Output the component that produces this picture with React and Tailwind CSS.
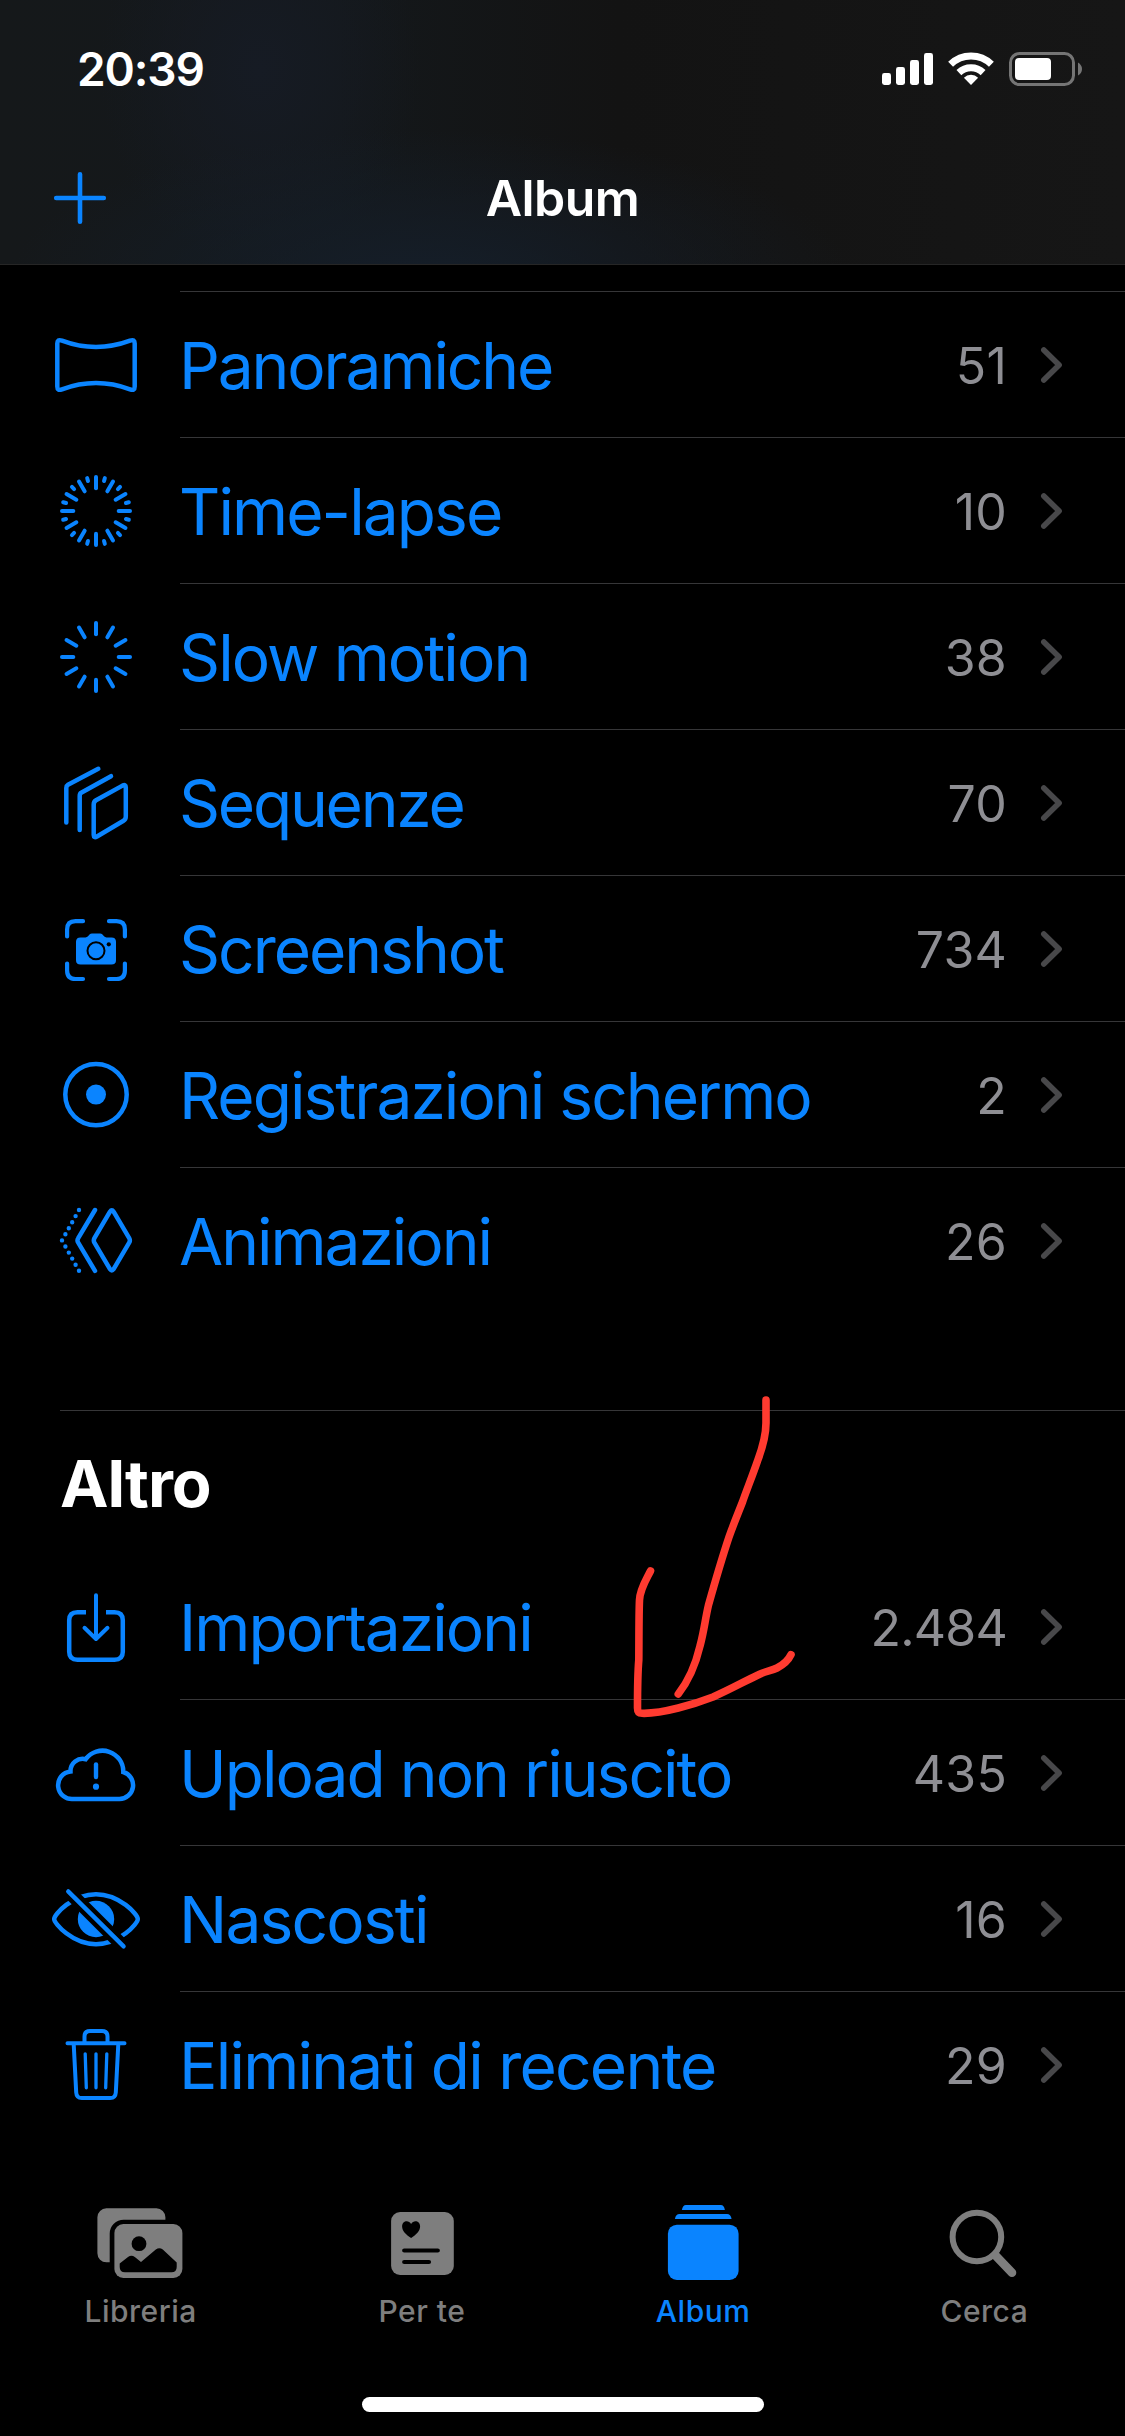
import React from "react";

const mediaTypes = [
  { label: "Panoramiche", count: "51", icon: "panorama", spacing: "tracking-[-2.1px]" },
  { label: "Time-lapse", count: "10", icon: "timelapse", spacing: "tracking-[-1.9px]" },
  { label: "Slow motion", count: "38", icon: "slowmo", spacing: "tracking-[-1.9px]" },
  { label: "Sequenze", count: "70", icon: "burst", spacing: "tracking-[-2.2px]" },
  { label: "Screenshot", count: "734", icon: "screenshot", spacing: "tracking-[-2px]" },
  { label: "Registrazioni schermo", count: "2", icon: "record", spacing: "tracking-[-1.95px]" },
  { label: "Animazioni", count: "26", icon: "animated", spacing: "tracking-[-2px]" },
];

const others = [
  { label: "Importazioni", count: "2.484", icon: "import", spacing: "tracking-[-1.9px]" },
  { label: "Upload non riuscito", count: "435", icon: "cloud", spacing: "tracking-[-1.95px]" },
  { label: "Nascosti", count: "16", icon: "hidden", spacing: "tracking-[-1.8px]" },
  { label: "Eliminati di recente", count: "29", icon: "trash", spacing: "tracking-[-1.75px]" },
];

const Ticks = ({ count, from, to, offset = 0 }) =>
  Array.from({ length: count }, (_, i) => (
    <line
      key={i}
      x1="0"
      x2="0"
      y1={-from}
      y2={-to}
      strokeWidth="4"
      transform={`rotate(${offset + (i * 360) / count})`}
    />
  ));

// Row icons are drawn around (0, 0)
const rowIcons = {
  panorama: (
    <path d="M-38.7 -21.5 C-38.7 -24.8 -37.3 -25.5 -34 -24.3 C-22 -19.8 -12 -18 0 -18 C12 -18 22 -19.8 34 -24.3 C37.3 -25.5 38.7 -24.8 38.7 -21.5 V21.5 C38.7 24.8 37.3 25.5 34 24.3 C22 19.8 12 18 0 18 C-12 18 -22 19.8 -34 24.3 C-37.3 25.5 -38.7 24.8 -38.7 21.5 Z" />
  ),
  timelapse: (
    <>
      <Ticks count={12} from={22.7} to={34} />
      <Ticks count={12} from={31} to={34} offset={15} />
    </>
  ),
  slowmo: <Ticks count={12} from={22.7} to={34} />,
  burst: (
    <>
      <path d="M2.3 -34.2 L-28 -18.2 Q-29.7 -17.2 -29.7 -15 V19.5" />
      <path d="M15 -26.8 L-14.8 -10.2 Q-16.3 -9.4 -16.3 -7 V27" />
      <path d="M-2.3 1.5 Q-2.3 -1.5 0 -2.8 L26.5 -17.4 Q29.8 -19 29.8 -15.8 V13.5 Q29.8 16.4 27.5 17.7 L1 33.5 Q-2.3 35.3 -2.3 32 Z" />
    </>
  ),
  screenshot: (
    <>
      <path
        strokeWidth="4.2"
        d="M-13 -27.8 H-20.5 Q-28.9 -27.8 -28.9 -19.5 V-12.5 M13 -27.8 H20.5 Q28.9 -27.8 28.9 -19.5 V-12.5 M-13 30 H-20.5 Q-28.9 30 -28.9 21.5 V14.5 M13 30 H20.5 Q28.9 30 28.9 21.5 V14.5"
      />
      <path
        fill="currentColor"
        stroke="none"
        d="M-15.5 -11.6 H-10.5 Q-9 -11.6 -8 -12.7 L-6.5 -14.4 Q-5.5 -15.4 -4 -15.4 H4 Q5.5 -15.4 6.5 -14.4 L8 -12.7 Q9 -11.6 10.5 -11.6 H15.5 Q20 -11.6 20 -7.2 V11.2 Q20 15.6 15.5 15.6 H-15.5 Q-20 15.6 -20 11.2 V-7.2 Q-20 -11.6 -15.5 -11.6 Z"
      />
      <circle cy="1.7" r="8.5" stroke="#000" strokeWidth="2" />
      <circle cx="12.8" cy="-4.7" r="2.1" fill="#000" stroke="none" />
    </>
  ),
  record: (
    <>
      <circle cy="-0.4" r="30.7" />
      <circle cy="-0.4" r="10" fill="currentColor" stroke="none" />
    </>
  ),
  animated: (
    <>
      <path d="M14 -29.3 Q15.8 -32 17.6 -29.3 L33.2 -2.8 Q34.5 -0.6 33.2 1.6 L17.6 28.1 Q15.8 30.8 14 28.1 L-1.6 1.6 Q-2.8 -0.6 -1.6 -2.8 Z" />
      <path d="M-1 -31 L-17.8 -2.8 Q-19.2 -0.6 -17.8 1.6 L-1 29.8" />
      <path
        strokeWidth="4.4"
        d="M-17 -31 h0 M-20.4 -24.9 h0 M-23.8 -18.8 h0 M-27.2 -12.8 h0 M-30.6 -6.7 h0 M-34 -0.6 h0 M-30.6 5.5 h0 M-27.2 11.6 h0 M-23.8 17.6 h0 M-20.4 23.7 h0 M-17 29.8 h0"
      />
    </>
  ),
  import: (
    <>
      <path strokeLinecap="butt" d="M-10 -14.8 H-18.5 Q-26.8 -14.8 -26.8 -6.8 V24.8 Q-26.8 32.8 -18.5 32.8 H18.5 Q26.8 32.8 26.8 24.8 V-6.8 Q26.8 -14.8 18.5 -14.8 H10" />
      <path strokeWidth="4" d="M0 -31.7 V11.8 M-11.5 0.8 L0 12 L11.5 0.8" />
    </>
  ),
  cloud: (
    <>
      <path strokeLinejoin="miter" d="M-22.5 26 A13.8 13.8 0 0 1 -25.5 -1.6 A12.3 12.3 0 0 1 -10.3 -13.8 A20.8 20.8 0 0 1 27.3 -1 A13.8 13.8 0 0 1 23.5 26 Z" />
      <path strokeWidth="4.4" d="M0 -8.5 V4" />
      <circle cy="13.7" r="3.1" fill="currentColor" stroke="none" />
    </>
  ),
  hidden: (
    <>
      <path d="M-41.8 0 C-41.8 -4.5 -23.5 -24.8 0 -24.8 C23.5 -24.8 41.8 -4.5 41.8 0 C41.8 4.5 23.5 25.2 0 25.2 C-23.5 25.2 -41.8 4.5 -41.8 0 Z" />
      <circle r="18.2" fill="currentColor" stroke="none" />
      <path stroke="#000" strokeWidth="13.5" strokeLinecap="butt" d="M-28 -28 L28 28" />
      <path strokeWidth="4.3" d="M-27.8 -27.6 L27.6 27.4" />
    </>
  ),
  trash: (
    <>
      <path d="M-28.5 -21.7 H28.5 M-11.5 -22 V-28.5 Q-11.5 -34 -6 -34 H6 Q11.5 -34 11.5 -28.5 V-22" strokeWidth="4" />
      <path d="M-22.3 -21 L-19.8 27.5 Q-19.5 33 -14.2 33 H14.2 Q19.5 33 19.8 27.5 L22.3 -21" strokeWidth="4" />
      <path d="M-10.8 -11.2 L-9.7 22.8 M0 -11.2 V22.8 M10.8 -11.2 L9.7 22.8" strokeWidth="3.3" />
    </>
  ),
};

const tabs = [
  {
    label: "Libreria",
    icon: (
      <>
        <path d="M13.4 8.3 H63.4 A9 9 0 0 1 72.4 17.3 V19.7 H30.7 A14 14 0 0 0 16.7 33.7 V62.3 H13.4 A9 9 0 0 1 4.4 53.3 V17.3 A9 9 0 0 1 13.4 8.3 Z" />
        <rect x="21.4" y="24" width="68" height="54" rx="9" />
        <circle cx="46" cy="43.7" r="7.4" fill="#000" />
        <path
          fill="#000"
          d="M26.7 63.5 L35 57 Q38.4 54.4 41.8 57 L48 62 L62.8 49.6 Q66.3 46.9 69.8 49.6 L83.7 62.5 V67 Q83.7 72.3 78.5 72.3 H32 Q26.7 72.3 26.7 67 Z"
        />
      </>
    ),
  },
  {
    label: "Per te",
    icon: (
      <>
        <rect x="17.1" y="12" width="62.7" height="63" rx="9" />
        <path
          fill="#000"
          d="M37.1 38 C32 34.5 28.1 30.8 28.1 26.4 C28.1 20.8 34.6 19.5 37.1 24 C39.6 19.5 46.1 20.8 46.1 26.4 C46.1 30.8 42.2 34.5 37.1 38 Z"
        />
        <path stroke="#000" strokeWidth="4.2" strokeLinecap="round" d="M30.2 50.5 H63.8 M30.2 62 H55" />
      </>
    ),
  },
  {
    label: "Album",
    active: true,
    icon: (
      <>
        <path d="M30.9 5 H65.9 Q69 5 69.9 10 H26.9 Q27.8 5 30.9 5 Z" />
        <path d="M24.5 14 H72 Q75.7 14 76.6 19 H19.9 Q20.8 14 24.5 14 Z" />
        <rect x="12.9" y="24.7" width="70.7" height="55.3" rx="9" />
      </>
    ),
  },
  {
    label: "Cerca",
    icon: (
      <>
        <circle cx="40.9" cy="37" r="24.3" fill="none" stroke="currentColor" strokeWidth="6" />
        <path d="M60 56 L76 72.7" stroke="currentColor" strokeWidth="8.6" strokeLinecap="round" />
      </>
    ),
  },
];

const StatusBar = () => (
  <div className="flex h-[132px] items-start justify-between pl-[77px] pr-[42px] pt-[44px]">
    <div className="text-[46px] font-semibold leading-[50px] tracking-[-1.1px]">20:39</div>
    <svg width="201" height="34" viewBox="0 0 201 34" className="mt-[8px]" fill="currentColor">
      <rect x="0" y="21" width="9" height="12" rx="2.4" />
      <rect x="14" y="15" width="9" height="18" rx="2.4" />
      <rect x="28" y="8" width="9" height="25" rx="2.4" />
      <rect x="42" y="1" width="9" height="32" rx="2.4" />
      <g fill="none" stroke="currentColor" strokeWidth="7">
        <path d="M68.6 12.2 A29.3 29.3 0 0 1 109.4 12.2" />
        <path d="M76.9 20.6 A17.6 17.6 0 0 1 101.1 20.6" />
      </g>
      <path d="M89 33 L81.9 25.7 A10 10 0 0 1 96.1 25.7 Z" />
      <rect x="128.5" y="1.5" width="63" height="31" rx="9" fill="none" stroke="#757575" strokeWidth="3" />
      <rect x="133" y="6" width="36" height="22" rx="4" />
      <path d="M196 10.5 Q200 13 200 17 Q200 21 196 23.5 Z" fill="#757575" />
    </svg>
  </div>
);

const NavBar = () => (
  <div className="grid grid-cols-3 items-center px-[52px] pt-[38px]">
    <svg width="56" height="56" viewBox="-28 -28 56 56" className="text-[#0a84ff]">
      <path d="M-23.8 0 H23.8 M0 -23.8 V23.8" stroke="currentColor" strokeWidth="4.6" strokeLinecap="round" />
    </svg>
    <h1 className="text-center text-[50px] font-semibold leading-[56px] tracking-[-0.6px]">Album</h1>
  </div>
);

const AlbumRow = ({ item, last }) => (
  <div className="flex h-[146px] items-center pl-[48px]">
    <svg
      width="96"
      height="96"
      viewBox="-48 -48 96 96"
      fill="none"
      stroke="currentColor"
      strokeWidth="4.5"
      strokeLinecap="round"
      strokeLinejoin="round"
      className="shrink-0 text-[#0a84ff]"
    >
      {rowIcons[item.icon]}
    </svg>
    <div
      className={`ml-[36px] flex h-full flex-1 items-center border-b pr-[61px] ${
        last ? "border-transparent" : "border-[#363638]"
      }`}
    >
      <span className={`-ml-px flex-1 whitespace-nowrap pt-[2px] text-[64px] leading-[80px] text-[#0a84ff] ${item.spacing}`}>
        {item.label}
      </span>
      <span
        className={`pt-[2px] text-[50px] leading-[60px] text-[#8e8e93] ${
          item.count.includes(".") ? "tracking-[-0.8px]" : "tracking-[0.2px]"
        }`}
      >
        {item.count}
      </span>
      <svg width="24" height="40" viewBox="0 0 24 40" className="ml-[33px] mt-px text-[#48484a]">
        <path
          d="M3.8 5 L19.1 20 L3.8 35"
          fill="none"
          stroke="currentColor"
          strokeWidth="5.6"
          strokeLinecap="round"
          strokeLinejoin="round"
        />
      </svg>
    </div>
  </div>
);

const TabBar = () => (
  <nav className="flex pt-[62px]">
    {tabs.map((tab) => (
      <div
        key={tab.label}
        className={`flex flex-1 flex-col items-center ${tab.active ? "text-[#0a84ff]" : "text-[#7e7e7e]"}`}
      >
        <svg width="96" height="84" viewBox="0 0 96 84" fill="currentColor">
          {tab.icon}
        </svg>
        <span className="mt-[9px] text-[30px] font-medium leading-[36px] tracking-[0.5px]">{tab.label}</span>
      </div>
    ))}
  </nav>
);

// Hand-drawn arrow over the list
const MarkupArrow = () => (
  <svg
    width="240"
    height="380"
    viewBox="0 0 240 380"
    fill="none"
    stroke="#ff3b30"
    strokeWidth="7.6"
    strokeLinecap="round"
    strokeLinejoin="round"
    className="pointer-events-none absolute left-[600px] top-[1370px]"
  >
    <path d="M166 30 V53 C166 66 162 79 157.5 91 C152 107 147 119 142.5 132 C137 146 134 153 129 167 C122 188 115 212 108.5 235 C105 250 104.5 259 100 276 C96 293 90 309 78.3 324" />
    <path d="M50.5 201 C46 210 40 219 39.5 230 C38.8 245 39 270 38.8 290 C37.5 305 37.5 320 37.5 338 C37.5 342 39 343.3 42 343.3 C62 344 95 334 113 327 C133 318 143 312 158 305 C166 301 171 301 177 298 C183 295 188 291 191 284.7" />
  </svg>
);

const App = () => (
  <div className="relative flex h-[2436px] w-[1125px] flex-col overflow-hidden bg-black font-['Inter','Liberation_Sans',sans-serif] text-white">
    <header className="h-[265px] shrink-0 border-b border-[#262626] bg-[#151515] bg-[radial-gradient(ellipse_420px_150px_at_430px_280px,#151e29,transparent),radial-gradient(ellipse_160px_200px_at_260px_70px,#161b24,transparent),linear-gradient(90deg,#15181a,#14181b_30%,#131313_55%,#161616)]">
      <StatusBar />
      <NavBar />
    </header>

    <section className="pt-[26px]">
      <div className="ml-[180px] h-px bg-[#363638]" />
      {mediaTypes.map((item, i) => (
        <AlbumRow key={item.label} item={item} last={i === mediaTypes.length - 1} />
      ))}
    </section>

    <section className="pt-[96px]">
      <div className="ml-[60px] h-px bg-[#363638]" />
      <h2 className="h-[143px] pl-[60px] pt-[33px] text-[65px] font-bold leading-[80px] tracking-[-1px]">Altro</h2>
      {others.map((item, i) => (
        <AlbumRow key={item.label} item={item} last={i === others.length - 1} />
      ))}
    </section>

    <TabBar />
    <div className="ml-[362px] mt-auto mb-[24px] h-[15px] w-[402px] shrink-0 rounded-full bg-white" />
    <MarkupArrow />
  </div>
);

export default App;
